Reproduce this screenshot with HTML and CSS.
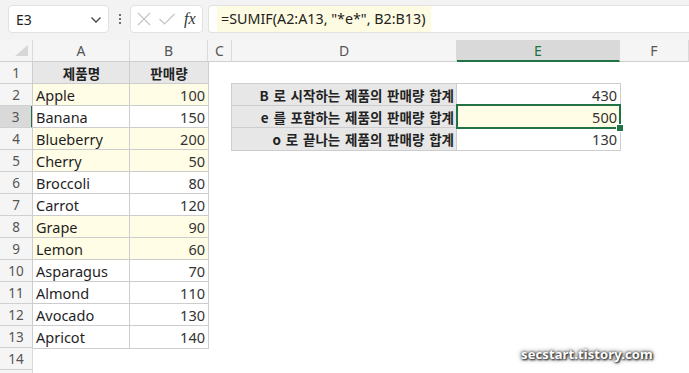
FILE: index.html
```html
<!DOCTYPE html>
<html lang="ko">
<head>
    <meta charset="UTF-8">
    <title>SUMIF</title>
    <link rel="stylesheet" href="styles.css">
</head>
<body>
    <div class="toolbar">
        <div class="name-box">
            <span>E3</span>
            <svg class="chevron" width="12" height="8" viewBox="0 0 12 8"><path d="M1.5 1.5 L6 6 L10.5 1.5" fill="none" stroke="#444" stroke-width="1.3"/></svg>
        </div>
        <div class="dots"><i></i><i></i><i></i></div>
        <div class="fx-box">
            <svg width="16" height="16" viewBox="0 0 16 16"><path d="M2 2 L14 14 M14 2 L2 14" stroke="#c4c4c4" stroke-width="1.2"/></svg>
            <svg width="18" height="16" viewBox="0 0 18 16"><path d="M1.5 8 L6.5 13 L16.5 3" fill="none" stroke="#c4c4c4" stroke-width="1.2"/></svg>
            <span class="fx">fx</span>
        </div>
        <div class="formula">
            <span class="formula-text">=SUMIF(A2:A13, "*e*", B2:B13)</span>
        </div>
    </div>

    <div class="sheet" id="sheet">
        <!-- 셀은 JavaScript로 생성 -->
    </div>

    <div class="watermark">secstart.tistory.com</div>

    <script>
        const cols = ['', 'A', 'B', 'C', 'D', 'E', 'F'];

        // 제품 데이터 (yellow = 노란 배경)
        const products = [
            { name: 'Apple', qty: 100, yellow: true },
            { name: 'Banana', qty: 150 },
            { name: 'Blueberry', qty: 200, yellow: true },
            { name: 'Cherry', qty: 50, yellow: true },
            { name: 'Broccoli', qty: 80 },
            { name: 'Carrot', qty: 120 },
            { name: 'Grape', qty: 90, yellow: true },
            { name: 'Lemon', qty: 60, yellow: true },
            { name: 'Asparagus', qty: 70 },
            { name: 'Almond', qty: 110 },
            { name: 'Avocado', qty: 130 },
            { name: 'Apricot', qty: 140 }
        ];

        const summary = [
            { label: 'B 로 시작하는 제품의 판매량 합계', value: 430 },
            { label: 'e 를 포함하는 제품의 판매량 합계', value: 500, active: true },
            { label: 'o 로 끝나는 제품의 판매량 합계', value: 130 }
        ];

        function cell(cls, text) {
            const div = document.createElement('div');
            div.className = 'cell ' + cls;
            if (text !== undefined) div.textContent = text;
            return div;
        }

        function renderSheet() {
            const sheet = document.getElementById('sheet');

            // 열 머리글
            sheet.appendChild(cell('corner'));
            sheet.lastChild.innerHTML = '<svg width="14" height="12" viewBox="0 0 14 12"><path d="M13 0 L13 11 L0 11 Z" fill="#d6d6d6"/></svg>';
            cols.slice(1).forEach(c => {
                sheet.appendChild(cell('col-head' + (c === 'E' ? ' active' : ''), c));
            });

            for (let r = 1; r <= 15; r++) {
                // 15행은 화면 아래에 살짝만 보임
                sheet.appendChild(cell('row-head' + (r === 3 ? ' active' : ''), r < 15 ? r : ''));

                // A, B
                if (r === 1) {
                    sheet.appendChild(cell('box head center', '제품명'));
                    sheet.appendChild(cell('box head center', '판매량'));
                } else if (r <= 13) {
                    const p = products[r - 2];
                    const y = p.yellow ? ' yellow' : '';
                    sheet.appendChild(cell('box' + y, p.name));
                    sheet.appendChild(cell('box num' + y, p.qty));
                } else {
                    sheet.appendChild(cell(''));
                    sheet.appendChild(cell(''));
                }

                sheet.appendChild(cell(''));

                // D, E
                if (r >= 2 && r <= 4) {
                    const s = summary[r - 2];
                    sheet.appendChild(cell('box head label', s.label));
                    sheet.appendChild(cell('box num' + (s.active ? ' yellow selected' : ''), s.value));
                } else {
                    sheet.appendChild(cell(''));
                    sheet.appendChild(cell(''));
                }

                sheet.appendChild(cell(''));
            }
        }

        document.addEventListener('DOMContentLoaded', renderSheet);
    </script>
</body>
</html>
```

FILE: styles.css
```css
* {
    margin: 0;
    padding: 0;
    box-sizing: border-box;
}

body {
    font-family: 'Noto Sans', 'Noto Sans CJK KR', sans-serif;
    background: #ffffff;
    width: 689px;
    height: 373px;
    overflow: hidden;
    position: relative;
    color: #1f1f1f;
}

/* 수식 입력줄 */
.toolbar {
    height: 40px;
    background: #f3f3f3;
    display: flex;
    align-items: flex-start;
    padding: 5px 0 0 8px;
}

.name-box {
    width: 101px;
    height: 28px;
    background: #fff;
    border: 1px solid #e1e1e1;
    border-radius: 4px;
    display: flex;
    align-items: center;
    justify-content: space-between;
    padding: 0 6px 0 7px;
    font-size: 14px;
    color: #222;
}

.chevron {
    margin-top: 2px;
}

.dots {
    width: 21px;
    height: 28px;
    display: flex;
    flex-direction: column;
    align-items: center;
    justify-content: center;
    gap: 2px;
}

.dots i {
    width: 2px;
    height: 2px;
    background: #444;
    border-radius: 1px;
}

.fx-box {
    width: 73px;
    height: 28px;
    background: #fff;
    border: 1px solid #e1e1e1;
    border-radius: 4px;
    display: flex;
    align-items: center;
    gap: 6px;
    padding: 0 0 0 5px;
}

.fx {
    font-family: 'Liberation Serif', serif;
    font-style: italic;
    font-size: 16px;
    color: #333;
    margin-left: 2px;
}

.formula {
    flex: 1;
    height: 28px;
    margin-left: 5px;
    background: #fff;
    border: 1px solid #e1e1e1;
    border-right: none;
    border-radius: 4px 0 0 4px;
    padding-left: 8px;
}

.formula-text {
    display: inline-block;
    height: 26px;
    line-height: 26px;
    background: #fdfbe1;
    padding: 0 6px 0 4px;
    font-size: 14.3px;
    color: #222;
}

/* 시트 */
.sheet {
    display: grid;
    grid-template-columns: 33px 97px 78px 24px 225px 163px 69px;
    grid-auto-rows: 22px;
}

.cell {
    font-size: 14.5px;
    line-height: 22px;
    padding: 0 3px;
    white-space: nowrap;
    overflow: hidden;
}

.corner,
.col-head,
.row-head {
    background: #f5f5f5;
    border-right: 1px solid #dadada;
    border-bottom: 1px solid #d0d0d0;
    color: #555;
    text-align: center;
}

.corner {
    display: flex;
    align-items: flex-end;
    justify-content: flex-end;
    padding: 0 3px 4px 0;
}

.col-head {
    font-size: 14px;
}

.row-head {
    font-size: 13.5px;
}

.col-head.active {
    background: #d9d9d9;
    border-bottom: 2px solid #217346;
    color: #217346;
}

.row-head.active {
    background: #d9d9d9;
    border-right: 2px solid #217346;
}

.box {
    background: #fff;
    box-shadow: 0 0 0 1px #cdcdcd;
    overflow: visible;
}

.box.head {
    background: #e7e7e7;
    font-family: 'Noto Sans CJK KR', sans-serif;
    font-weight: bold;
    font-size: 13.5px;
    letter-spacing: 0;
    color: #222;
}

.center {
    text-align: center;
}

.label {
    text-align: right;
    letter-spacing: 0.3px;
    word-spacing: 1px;
}

.num {
    text-align: right;
    color: #333;
}

.yellow {
    background: #fffde6;
}

.selected {
    position: relative;
    z-index: 2;
}

/* 선택 테두리와 채우기 핸들 */
.selected::after {
    content: '';
    position: absolute;
    top: -2px;
    left: -1px;
    right: -1px;
    bottom: -1px;
    border: 2px solid #217346;
}

.selected::before {
    content: '';
    position: absolute;
    right: -4px;
    bottom: -4px;
    width: 6px;
    height: 6px;
    background: #217346;
    border: 1px solid #fff;
    z-index: 3;
}

.watermark {
    position: absolute;
    left: 521px;
    top: 345px;
    font-size: 13px;
    font-weight: bold;
    color: #fff;
    letter-spacing: 0.1px;
    text-shadow: 0 0 3px #333, 1px 1px 2px #222, 0 0 5px #555;
}
```
